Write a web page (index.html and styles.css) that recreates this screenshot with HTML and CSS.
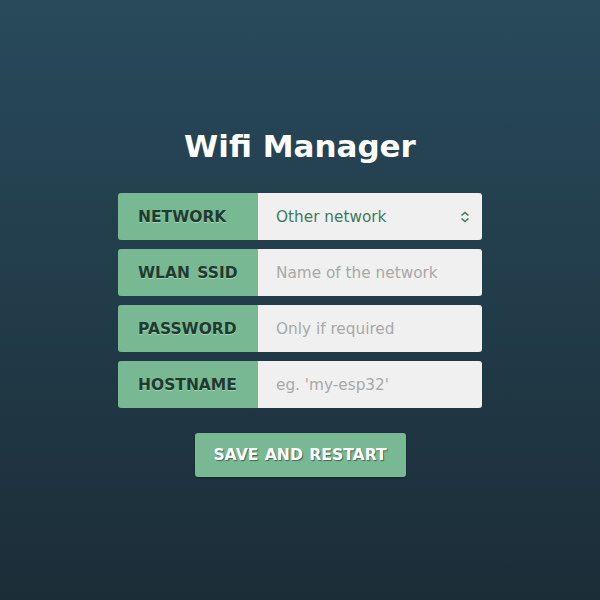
FILE: index.html
```html
<!DOCTYPE html>
<html>
<head>
<meta charset="utf-8">
<link rel="stylesheet" href="styles.css">
</head>
<body>
<main class="page">
  <h1 class="title">Wifi Manager</h1>
  <form class="form">
    <div class="row">
      <label class="label">NETWORK</label>
      <div class="field select">
        <span class="value">Other network</span>
        <svg class="chev" width="10" height="12" viewBox="0 0 10 12"><path d="M1.5 4.5 L5 1.5 L8.5 4.5 M1.5 7.5 L5 10.5 L8.5 7.5" fill="none" stroke="#3e7a5e" stroke-width="1.6"/></svg>
      </div>
    </div>
    <div class="row">
      <label class="label">WLAN SSID</label>
      <div class="field"><span class="ph">Name of the network</span></div>
    </div>
    <div class="row">
      <label class="label">PASSWORD</label>
      <div class="field"><span class="ph">Only if required</span></div>
    </div>
    <div class="row">
      <label class="label">HOSTNAME</label>
      <div class="field"><span class="ph">eg. 'my-esp32'</span></div>
    </div>
    <div class="actions">
      <button type="button" class="btn">SAVE AND RESTART</button>
    </div>
  </form>
</main>
</body>
</html>
```
FILE: styles.css
```css
html, body { margin: 0; height: 100%; }
body {
  background: linear-gradient(to bottom, #284a5b 0%, #1b2d37 100%);
  font-family: "DejaVu Sans", Verdana, sans-serif;
}
.page {
  width: 364px;
  margin: 0 auto;
  padding-top: 126px;
}
.title {
  margin: 0 0 27px;
  text-align: center;
  color: #ffffff;
  font-size: 31px;
  font-weight: bold;
  line-height: 40px;
}
.form { display: flex; flex-direction: column; gap: 9px; }
.row {
  display: flex;
  height: 47px;
  border-radius: 3px;
  overflow: hidden;
}
.label {
  width: 140px;
  flex: none;
  box-sizing: border-box;
  padding-left: 20px;
  display: flex;
  align-items: center;
  background: #78b994;
  color: #1f3a2e;
  font-weight: bold;
  font-size: 15.5px;
  word-spacing: 2px;
  text-shadow: 0 1px 0 rgba(255,255,255,0.35);
}
.field {
  flex: 1;
  display: flex;
  align-items: center;
  padding: 0 12px 0 18px;
  background: #f0f0f0;
  font-size: 15.3px;
}
.value { color: #3e7a5e; flex: 1; }
.ph { color: #a8a8a8; }
.chev { flex: none; }
.actions { display: flex; justify-content: center; margin-top: 16px; }
.btn {
  width: 211px;
  height: 44px;
  border: none;
  border-radius: 3px;
  background: #78b994;
  color: #ffffff;
  font-family: "DejaVu Sans", Verdana, sans-serif;
  font-weight: bold;
  font-size: 15.6px;
  word-spacing: 1px;
  text-shadow: 1px 1px 1px rgba(0,0,0,0.45);
  box-shadow: 0 1px 2px rgba(0,0,0,0.3);
  padding: 0;
}
```
